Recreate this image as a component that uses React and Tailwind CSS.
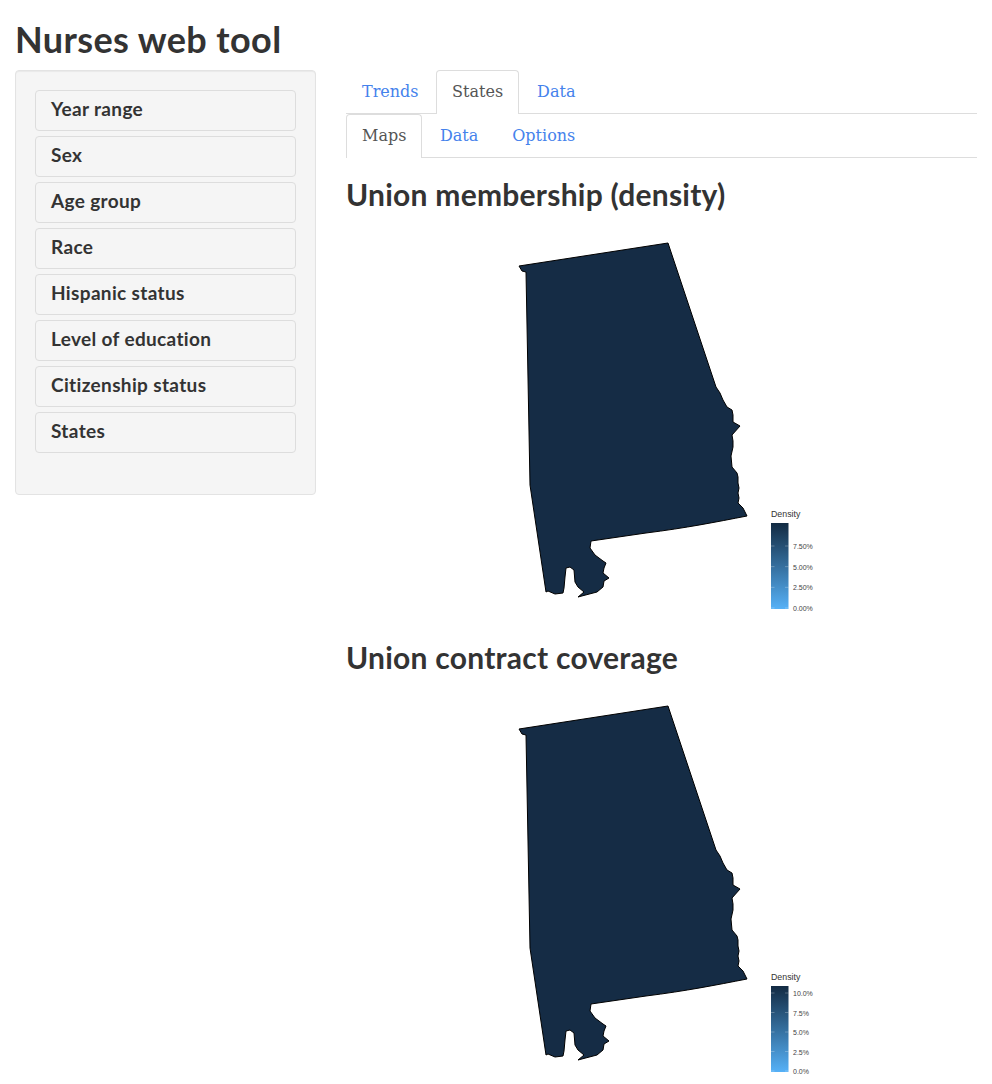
import React from "react";

const filters = ["Year range", "Sex", "Age group", "Race", "Hispanic status", "Level of education", "Citizenship status", "States"];

// Outline of the state, in page coordinates of the first map minus the svg origin (346, 225)
const outline =
  "M173 41 L322 18 L366 150 L370 162 L374 168 L377 175 L381 182 L386 185 L387 190 L387 197 L394 201 L386 210 L387 216 L387 222 L385 231 L386 242 L391 248 L392 252 L392 258 L393 263 L392 268 L393 273 L392 278 L397 283 L401 291 C370 297 340 303 300 308 L245 316 L244 323 L249 330 L257 336 L260 338 L258 343 L257 348 L263 353 L258 356 L257 362 L251 367 L232 372 L238 367 L232 362 L229 357 L228 345 L224 342 L220 343 L219 352 L218 363 L217 368 L209 369 L202 366 L200 367 L184 260 L180 47 L176 46 Z";

function StateMap({ labels, firstTickY }) {
  return (
    <svg width="631" height="400" viewBox="0 0 631 400" className="block">
      <defs>
        <linearGradient id={"ramp" + labels[0].length} x1="0" y1="0" x2="0" y2="1">
          <stop offset="0" stopColor="#132b43" />
          <stop offset="1" stopColor="#56b1f7" />
        </linearGradient>
      </defs>
      <path d={outline} fill="#152c45" stroke="#000000" strokeWidth="1" strokeLinejoin="round" />
      <text x="425" y="292" fontSize="8.8" fill="#333333" fontFamily="Liberation Sans, sans-serif">Density</text>
      <rect x="425" y="298" width="17.5" height="86" fill={"url(#ramp" + labels[0].length + ")"} />
      {labels.map((label, i) => {
        const y = firstTickY + i * ((383 - firstTickY) / (labels.length - 1));
        return (
          <g key={label}>
            <line x1="425" x2="428.5" y1={y} y2={y} stroke="#ffffff" strokeOpacity="0.45" strokeWidth="0.6" />
            <line x1="439" x2="442.5" y1={y} y2={y} stroke="#ffffff" strokeOpacity="0.45" strokeWidth="0.6" />
            <text x="447" y={y + 3} fontSize="7" fill="#444444" fontFamily="Liberation Sans, sans-serif">{label}</text>
          </g>
        );
      })}
    </svg>
  );
}

export default function App() {
  return (
    <div className="bg-white min-h-screen px-[15px] text-[#333333] font-['Lato','Liberation_Sans',sans-serif]">
      <h1 className="text-[36px] leading-[40px] font-bold pt-[19px] mb-[11px] tracking-[0.4px]">Nurses web tool</h1>

      <div className="flex">
        <div className="w-[301px] h-[425px] shrink-0 bg-[#f5f5f5] border border-[#e3e3e3] rounded-[4px] shadow-[inset_0_1px_1px_rgba(0,0,0,0.05)] pt-[19px] px-[19px]">
          <div className="flex flex-col gap-[5px]">
            {filters.map((name) => (
              <div key={name} className="h-[41px] border border-[#dddddd] rounded-[4px] bg-[#f5f5f5] pl-[15px] pb-[2px] flex items-center text-[19px] tracking-[0.35px] font-bold">
                {name}
              </div>
            ))}
          </div>
        </div>

        <div className="ml-[30px] w-[631px]">
          <div className="flex h-[44px] border-b border-[#dddddd] font-['DejaVu_Serif',serif] text-[16px]">
            <a className="px-[16px] pt-[10px] text-[#4582ec]">Trends</a>
            <a className="ml-[1.5px] h-[44px] px-[15px] pt-[9px] bg-white border border-[#dddddd] border-b-0 rounded-t-[4px] text-[#555555]">States</a>
            <a className="ml-[2px] px-[16px] pt-[10px] text-[#4582ec]">Data</a>
          </div>
          <div className="flex h-[44px] border-b border-[#dddddd] font-['DejaVu_Serif',serif] text-[16px]">
            <a className="h-[44px] px-[15px] pt-[9px] bg-white border border-[#dddddd] border-b-0 rounded-t-[4px] text-[#555555]">Maps</a>
            <a className="ml-[1.5px] px-[16px] pt-[10px] text-[#4582ec]">Data</a>
            <a className="ml-[2px] px-[16px] pt-[10px] text-[#4582ec]">Options</a>
          </div>

          <h2 className="text-[30px] leading-[33px] font-bold tracking-[0.25px] mt-[20px] mb-[14px]">Union membership (density)</h2>
          <StateMap labels={["7.50%", "5.00%", "2.50%", "0.00%"]} firstTickY={321} />
          <h2 className="text-[30px] leading-[33px] font-bold tracking-[0.25px] mt-[16px] mb-[14px]">Union contract coverage</h2>
          <StateMap labels={["10.0%", "7.5%", "5.0%", "2.5%", "0.0%"]} firstTickY={305} />
        </div>
      </div>
    </div>
  );
}
